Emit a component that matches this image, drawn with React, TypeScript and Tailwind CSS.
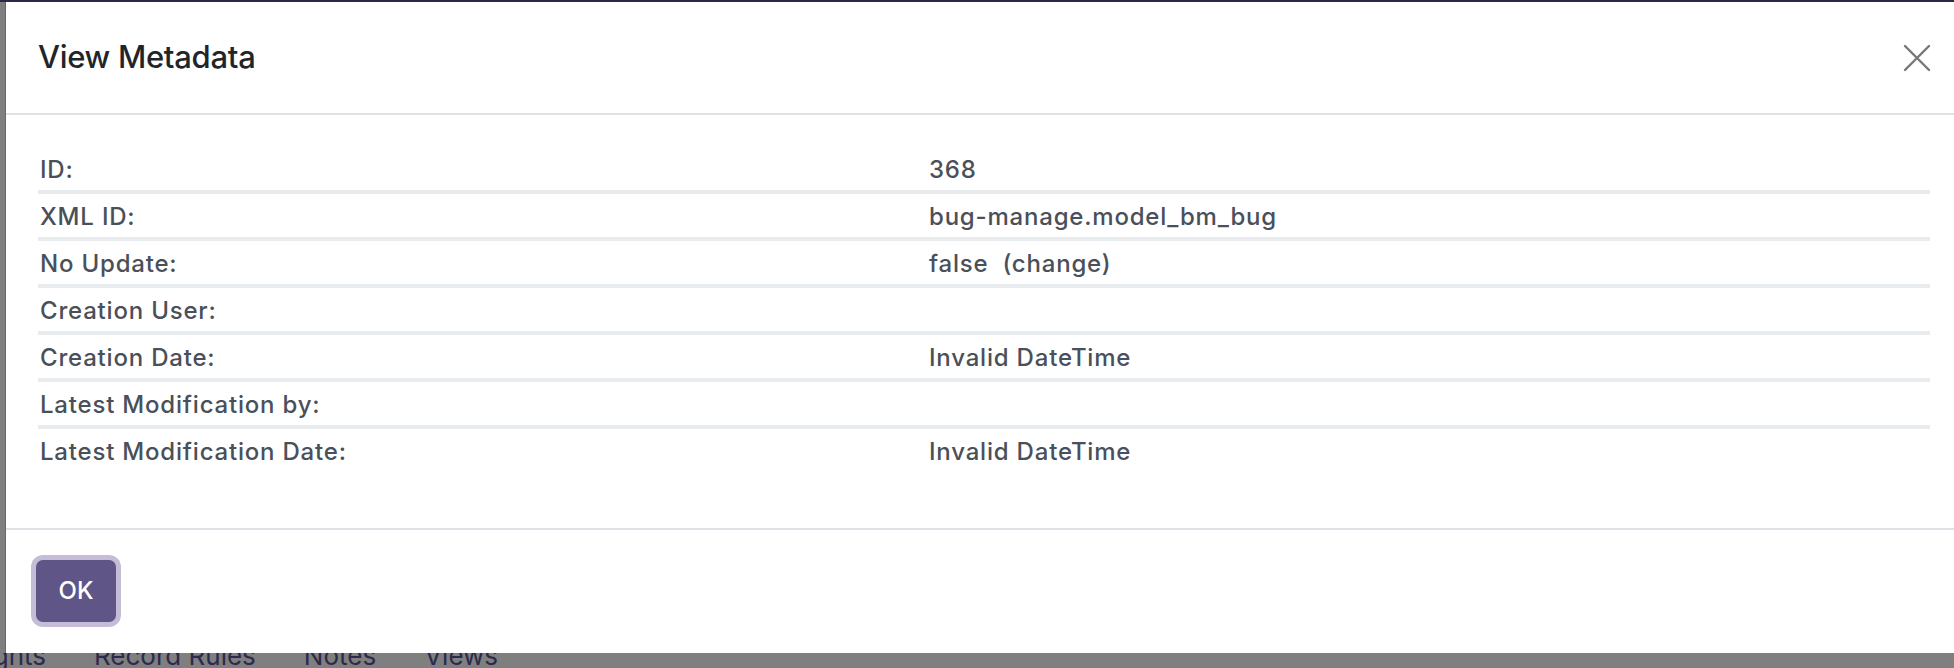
const font = "font-['Inter','Noto_Sans',sans-serif]"

const rows: [string, string][] = [
  ["ID:", "368"],
  ["XML ID:", "bug-manage.model_bm_bug"],
  ["No Update:", "false"],
  ["Creation User:", ""],
  ["Creation Date:", "Invalid DateTime"],
  ["Latest Modification by:", ""],
  ["Latest Modification Date:", "Invalid DateTime"],
]

function CloseIcon() {
  return (
    <svg width="28" height="28" viewBox="0 0 28 28" fill="none" stroke="#777" strokeWidth="2.4" strokeLinecap="round">
      <path d="M2 2 L26 26 M26 2 L2 26" />
    </svg>
  )
}

export default function App() {
  return (
    <div className={`w-[1954px] h-[668px] overflow-hidden bg-[#7f7f7f] flex flex-col ${font}`}>
      {/* darkened navbar */}
      <div className="h-[2px] shrink-0 bg-[#2d2945]" />

      {/* modal */}
      <div className="h-[651px] shrink-0 ml-[5px] flex flex-col bg-white border-l border-[#666]">
        <div className="h-[111px] shrink-0 flex items-center justify-between pl-[32px] pr-[23px]">
          <h4 className="text-[31px] font-medium text-[#212529] tracking-[-0.3px]">View Metadata</h4>
          <button className="flex items-center justify-center">
            <CloseIcon />
          </button>
        </div>
        <div className="h-[2px] shrink-0 bg-[#dee2e6]" />

        <div className="h-[413px] shrink-0 pt-[32px] pl-[32px] pr-[24px]">
          {rows.map(([label, value], i) => (
            <div
              key={label}
              className={`flex items-center pt-[3px] text-[24px] font-medium tracking-[0.8px] text-[#4a5059] ${
                i < rows.length - 1 ? "h-[47px] border-b-4 border-[#e9ecef]" : "h-[43px]"
              }`}
            >
              <div className="w-[891px] pl-[2px]">{label}</div>
              <div>
                {value}
                {label === "No Update:" && <span className="ml-[14px]">(change)</span>}
              </div>
            </div>
          ))}
        </div>
        <div className="h-[2px] shrink-0 bg-[#dee2e6]" />

        <div className="flex-1 pl-[30px] pt-[30px]">
          <button className="w-[80px] h-[62px] rounded-[7px] bg-[#5f5586] text-white text-[24px] font-medium shadow-[0_0_0_5px_#c5bdd8]">
            OK
          </button>
        </div>
      </div>

      {/* page tabs behind the overlay */}
      <div className="flex-1 overflow-hidden">
        <div className="flex items-start gap-[48px] -mt-[10px] text-[26px] leading-none text-[#2c2a4d] whitespace-nowrap">
          <div className="w-[46px] flex justify-end overflow-hidden">
            <span>Access Rights</span>
          </div>
          <span>Record Rules</span>
          <span>Notes</span>
          <span>Views</span>
        </div>
      </div>
    </div>
  )
}
